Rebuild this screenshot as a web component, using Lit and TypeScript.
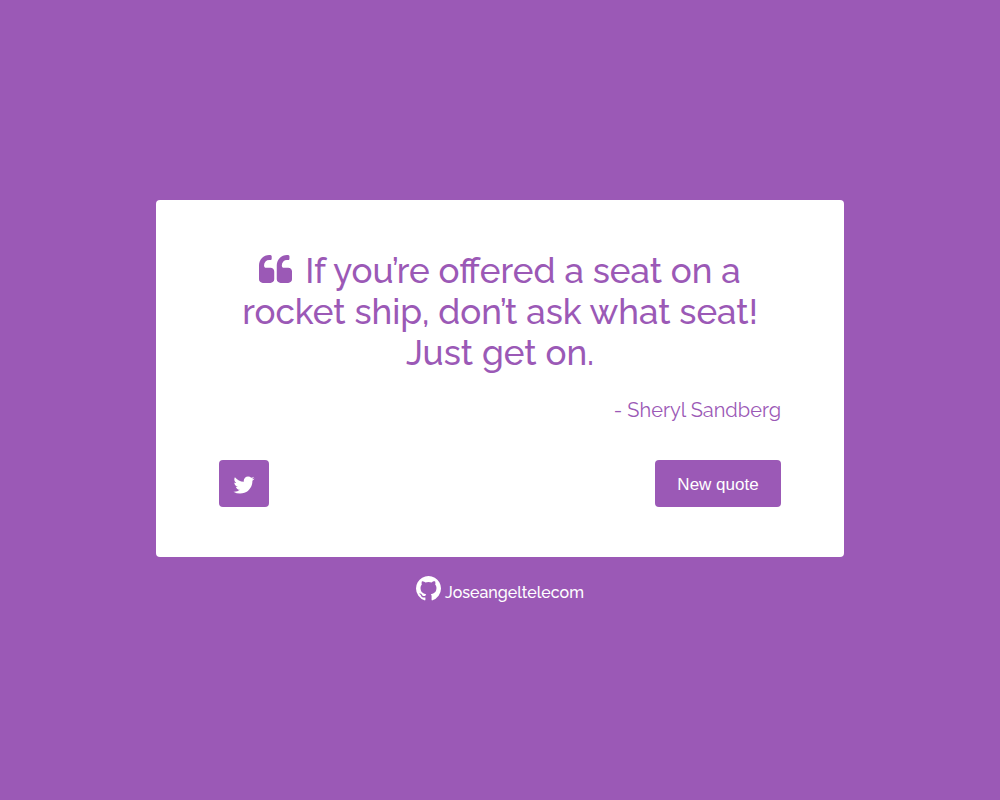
import { LitElement, html, css } from "lit";
import { customElement } from "lit/decorators.js";

@customElement("app-root")
class AppRoot extends LitElement {
  static styles = css`
    :host {
      display: flex;
      flex-direction: column;
      align-items: center;
      justify-content: center;
      min-height: 100vh;
      background: #9b59b6;
      color: #9b59b6;
      font-family: Raleway, Lato, sans-serif;
    }
    * { box-sizing: border-box; }
    .card {
      width: 688px;
      max-width: 100%;
      padding: 50px 63px;
      border-radius: 4px;
      background: #fff;
    }
    .quote {
      margin: 0;
      font-size: 35px;
      line-height: 41px;
      font-weight: 500;
      text-align: center;
    }
    .mark { width: 33px; height: 28px; margin-right: 4px; vertical-align: baseline; }
    .author {
      margin: 24px 0 37px;
      font-size: 20px;
      line-height: 26px;
      font-weight: 400;
      text-align: right;
    }
    .actions { display: flex; justify-content: space-between; }
    .btn {
      display: flex;
      align-items: center;
      justify-content: center;
      height: 47px;
      padding: 3px 0 0;
      border: 0;
      border-radius: 4px;
      background: #9b59b6;
      color: #fff;
      cursor: pointer;
    }
    .tweet { width: 50px; }
    .tweet svg { width: 24px; height: 24px; }
    .next { width: 126px; font: 17px "Liberation Sans", Arial, sans-serif; }
    .credit {
      display: flex;
      gap: 4px;
      align-items: flex-end;
      margin-top: 19px;
      color: #fff;
      font-size: 16px;
      font-weight: 500;
      line-height: 16px;
      text-decoration: none;
    }
    .credit svg { width: 25px; height: 25px; }
    svg { fill: currentColor; }
  `;

  render() {
    return html`
      <main class="card">
        <h1 class="quote">
          <svg class="mark" viewBox="0 128 1664 1408" aria-hidden="true"><path d="M768 960v384q0 80-56 136t-136 56H192q-80 0-136-56T0 1344V640q0-104 40.500-198.500T150 278 313.500 168.500 512 128h64q26 0 45 19t19 45v128q0 26-19 45t-45 19h-64q-106 0-181 75t-75 181v32q0 40 28 68t68 28h224q80 0 136 56t56 136zm896 0v384q0 80-56 136t-136 56h-384q-80 0-136-56t-56-136V640q0-104 40.500-198.500T1046 278t163.500-109.500T1408 128h64q26 0 45 19t19 45v128q0 26-19 45t-45 19h-64q-106 0-181 75t-75 181v32q0 40 28 68t68 28h224q80 0 136 56t56 136z"/></svg>
          If you’re offered a seat on a rocket ship, don’t ask what seat! Just get on.
        </h1>
        <p class="author">- Sheryl Sandberg</p>
        <div class="actions">
          <a class="btn tweet" href="#" aria-label="Tweet this quote"><svg viewBox="0 0 1792 1792" aria-hidden="true"><path d="M1684 408q-67 98-162 167 1 14 1 42 0 130-38 259.500t-115.500 248.500-184.500 210.500-258 146-323 54.500q-271 0-496-145 35 4 78 4 225 0 401-138-105-2-188-64.500t-114-159.500q33 5 61 5 43 0 85-11-112-23-185.500-111.500t-73.500-205.500v-4q68 38 146 41-66-44-105-115t-39-154q0-88 44-163 121 149 294.500 238.500t371.500 99.500q-8-38-8-74 0-134 94.500-228.500t228.500-94.500q140 0 236 102 109-21 205-78-37 115-142 178 93-10 186-50z"/></svg></a>
          <button class="btn next" type="button">New quote</button>
        </div>
      </main>
      <a class="credit" href="#">
        <svg viewBox="128 128 1536 1536" aria-hidden="true"><path d="M896 128q209 0 385.500 103t279.500 279.500 103 385.500q0 251-146.500 451.500t-378.500 277.500q-27 5-40-7t-13-30q0-3 .5-76.500t.5-134.500q0-97-52-142 57-6 102.500-18t94-39 81-66.500 53-105 20.500-150.500q0-119-79-206 37-91-8-204-28-9-81 11t-92 44l-38 24q-93-26-192-26t-192 26q-16-11-42.500-27t-83.500-38.500-85-13.500q-45 113-8 204-79 87-79 206 0 85 20.500 150t52.500 105 80.500 67 94 39 102.500 18q-39 36-49 103-21 10-45 15t-57 5-65.500-21.500-55.500-62.500q-19-32-48.500-52t-49.500-24l-20-3q-21 0-29 4.500t-5 11.500 9 14 13 12l7 5q22 10 43.500 38t31.500 51l10 23q13 38 44 61.500t67 30 69.500 7 55.500-3.500l23-4q0 38 .5 88.500t.5 54.500q0 18-13 30t-40 7q-232-77-378.500-277.500t-146.500-451.500q0-209 103-385.500t279.500-279.500 385.500-103z"/></svg>
        <span>Joseangeltelecom</span>
      </a>
    `;
  }
}
